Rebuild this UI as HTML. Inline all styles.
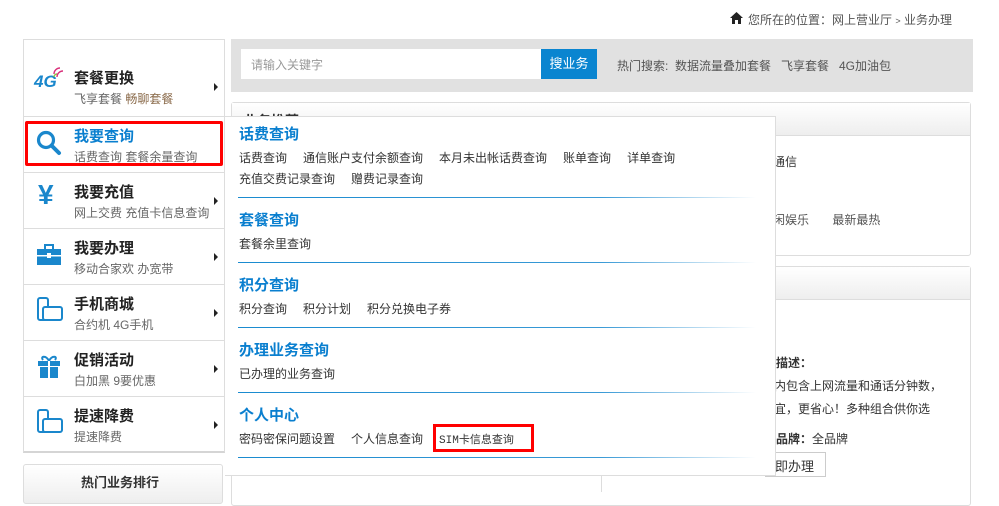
<!DOCTYPE html>
<html><head><meta charset="utf-8"><style>
*{margin:0;padding:0;box-sizing:border-box}
body{width:999px;height:492px;overflow:hidden;background:#fff;font-family:"Liberation Sans","Noto Sans CJK SC",sans-serif;font-size:12px;color:#333;position:relative}
.a{position:absolute;white-space:nowrap}
.menu{position:absolute;left:23px;top:39px;width:202px;height:414px;border:1px solid #ddd;border-bottom:2px solid #d5d5d5;background:#fff}
.it{position:absolute;left:0;width:200px;border-top:1px solid #ddd}
.it .t{position:absolute;left:50px;font-size:15px;font-weight:bold;color:#222}
.it .s{position:absolute;left:50px;font-size:12px;color:#666}
.it .ar{position:absolute;left:190px;width:0;height:0;border-left:4px solid #222;border-top:4px solid transparent;border-bottom:4px solid transparent}
.ic{position:absolute;left:12px}
.dd{position:absolute;left:225px;top:116px;width:551px;height:360px;background:#fff;border:1px solid #ddd;border-left:none}
.h{position:absolute;left:14px;font-size:15px;font-weight:bold;color:#0a7fcf}
.l{position:absolute;left:14px;font-size:12px;color:#333;word-spacing:0}
.l span{margin-right:16px}
.ln{position:absolute;left:13px;width:518px;height:1px;background:linear-gradient(to right,#1a8bd0,#3a9ad6 70%,rgba(120,190,230,0))}
</style></head><body>
<svg class="a" style="left:730px;top:12px" width="13" height="12" viewBox="0 0 13 12"><path d="M6.5 0L0 6h2v6h3V8h3v4h3V6h2z" fill="#222"/></svg>
<div class="a" style="left:748px;top:11px;font-size:12px;color:#555">您所在的位置：网上营业厅 <span style="font-size:9px">&gt;</span> 业务办理</div>

<div class="a" style="left:231px;top:39px;width:742px;height:53px;background:#e1e1e1"></div>
<div class="a" style="left:241px;top:49px;width:300px;height:30px;background:#fff"></div>
<div class="a" style="left:251px;top:56px;color:#999;font-size:12px">请输入关键字</div>
<div class="a" style="left:541px;top:49px;width:56px;height:30px;background:#0a85d0;color:#fff;font-size:13px;text-align:center;line-height:30px">搜业务</div>
<div class="a" style="left:617px;top:57px;color:#555">热门搜索:&nbsp; 数据流量叠加套餐&nbsp;&nbsp; 飞享套餐&nbsp;&nbsp; 4G加油包</div>

<div class="a" style="left:231px;top:102px;width:740px;height:154px;border:1px solid #ddd;border-radius:3px;background:#fff"></div>
<div class="a" style="left:232px;top:103px;width:738px;height:33px;background:linear-gradient(#fff,#eee);border-bottom:1px solid #ddd"></div>
<div class="a" style="left:243px;top:111px;font-size:14px;font-weight:bold;color:#333">业务推荐</div>
<div class="a" style="left:773px;top:153px;color:#333">通信</div>
<div class="a" style="left:773px;top:211px;color:#555">闲娱乐&nbsp;&nbsp;&nbsp;&nbsp;&nbsp;&nbsp;&nbsp;最新最热</div>
<div class="a" style="left:231px;top:266px;width:740px;height:240px;border:1px solid #ddd;border-radius:3px;background:#fff"></div>
<div class="a" style="left:232px;top:267px;width:738px;height:33px;background:linear-gradient(#fff,#eee);border-bottom:1px solid #ddd"></div>
<div class="a" style="left:601px;top:470px;width:1px;height:22px;background:#ddd"></div>
<div class="a" style="left:776px;top:354px;color:#333;font-weight:bold">描述：</div>
<div class="a" style="left:774px;top:377px;color:#333">内包含上网流量和通话分钟数，</div>
<div class="a" style="left:774px;top:400px;color:#333">宜，更省心！多种组合供你选</div>
<div class="a" style="left:776px;top:430px;color:#333"><b>品牌：</b>全品牌</div>
<div class="a" style="left:765px;top:452px;width:61px;height:25px;border:1px solid #ccc;background:#fff"></div>
<div class="a" style="left:775px;top:456px;color:#333;font-size:13px">即办理</div>

<div class="menu">
 <div class="it" style="top:-1px;height:77px;border-top:none">
  <div class="ic" style="top:33px;left:10px;font-style:italic;font-weight:bold;color:#1a87cc;font-size:17px">4G</div>
  <svg class="ic" style="left:29px;top:28px" width="12" height="12" viewBox="0 0 12 12"><path d="M1 10a3 3 0 0 1 3-3" stroke="#8cc63f" stroke-width="1.4" fill="none"/><path d="M1 7a6 6 0 0 1 6-6M1 4a9 9 0 0 1 0 0" stroke="#d9307a" stroke-width="1.4" fill="none"/><path d="M4 10a6 6 0 0 1 6-6" stroke="#d9307a" stroke-width="1.4" fill="none"/></svg>
  <div class="t" style="top:28px">套餐更换</div>
  <div class="s" style="top:51px">飞享套餐 <span style="color:#8a6a4a">畅聊套餐</span></div>
  <div class="ar" style="top:44px"></div>
 </div>
 <div class="it" style="top:76px;height:56px">
  <svg class="ic" style="top:13px" width="26" height="26" viewBox="0 0 26 26"><circle cx="10" cy="10" r="7.5" stroke="#1a87cc" stroke-width="3.2" fill="none"/><path d="M15.5 15.5L23 23" stroke="#1a87cc" stroke-width="4" stroke-linecap="round"/></svg>
  <div class="t" style="top:8px;color:#0a7fcf">我要查询</div>
  <div class="s" style="top:31px">话费查询 套餐余量查询</div>
 </div>
 <div class="it" style="top:132px;height:56px">
  <div class="ic" style="top:6px;left:14px;font-size:28px;font-weight:bold;color:#1a87cc">¥</div>
  <div class="t" style="top:8px">我要充值</div>
  <div class="s" style="top:31px">网上交费 充值卡信息查询</div>
  <div class="ar" style="top:24px"></div>
 </div>
 <div class="it" style="top:188px;height:56px">
  <svg class="ic" style="top:15px" width="26" height="22" viewBox="0 0 26 22"><rect x="9" y="1" width="8" height="5" fill="none" stroke="#1a87cc" stroke-width="2"/><rect x="1" y="5" width="24" height="16" fill="#1a87cc"/><rect x="0" y="11" width="26" height="1.5" fill="#fff"/><rect x="11" y="9" width="4" height="5" fill="#fff"/></svg>
  <div class="t" style="top:8px">我要办理</div>
  <div class="s" style="top:31px">移动合家欢 办宽带</div>
  <div class="ar" style="top:24px"></div>
 </div>
 <div class="it" style="top:244px;height:56px">
  <svg class="ic" style="top:12px;left:13px" width="26" height="26" viewBox="0 0 26 26"><rect x="1" y="1" width="10" height="22" rx="2" fill="#fff" stroke="#1a87cc" stroke-width="2"/><rect x="6" y="10" width="19" height="13" rx="2" fill="#fff" stroke="#1a87cc" stroke-width="2"/></svg>
  <div class="t" style="top:8px">手机商城</div>
  <div class="s" style="top:31px">合约机 4G手机</div>
  <div class="ar" style="top:24px"></div>
 </div>
 <div class="it" style="top:300px;height:56px">
  <svg class="ic" style="top:13px" width="26" height="26" viewBox="0 0 26 26"><path d="M13 7c-3-6-9-5-6-1M13 7c3-6 9-5 6-1" fill="none" stroke="#1a87cc" stroke-width="2"/><rect x="2" y="7" width="22" height="5" fill="#1a87cc"/><rect x="4" y="13" width="18" height="11" fill="#1a87cc"/><rect x="12" y="7" width="2" height="17" fill="#fff"/></svg>
  <div class="t" style="top:8px">促销活动</div>
  <div class="s" style="top:31px">白加黑 9要优惠</div>
  <div class="ar" style="top:24px"></div>
 </div>
 <div class="it" style="top:356px;height:56px">
  <svg class="ic" style="top:12px;left:13px" width="26" height="26" viewBox="0 0 26 26"><rect x="1" y="1" width="10" height="22" rx="2" fill="#fff" stroke="#1a87cc" stroke-width="2"/><rect x="6" y="10" width="19" height="13" rx="2" fill="#fff" stroke="#1a87cc" stroke-width="2"/></svg>
  <div class="t" style="top:8px">提速降费</div>
  <div class="s" style="top:31px">提速降费</div>
  <div class="ar" style="top:24px"></div>
 </div>
</div>
<div class="a" style="left:25px;top:121px;width:198px;height:45px;border:3px solid #f00;border-radius:2px"></div>

<div class="a" style="left:23px;top:464px;width:200px;height:40px;border:1px solid #ddd;border-radius:3px;background:linear-gradient(#fff,#eee)"></div>
<div class="a" style="left:81px;top:472px;font-size:13px;font-weight:bold;color:#333">热门业务排行</div>

<div class="dd">
 <div class="h" style="top:6px">话费查询</div>
 <div class="l" style="top:32px"><span>话费查询</span><span>通信账户支付余额查询</span><span>本月未出帐话费查询</span><span>账单查询</span><span>详单查询</span></div>
 <div class="l" style="top:53px"><span>充值交费记录查询</span><span>赠费记录查询</span></div>
 <div class="ln" style="top:80px"></div>
 <div class="h" style="top:92px">套餐查询</div>
 <div class="l" style="top:118px">套餐余里查询</div>
 <div class="ln" style="top:145px"></div>
 <div class="h" style="top:157px">积分查询</div>
 <div class="l" style="top:183px"><span>积分查询</span><span>积分计划</span><span>积分兑换电子券</span></div>
 <div class="ln" style="top:210px"></div>
 <div class="h" style="top:222px">办理业务查询</div>
 <div class="l" style="top:248px">已办理的业务查询</div>
 <div class="ln" style="top:275px"></div>
 <div class="h" style="top:287px">个人中心</div>
 <div class="l" style="top:313px"><span>密码密保问题设置</span><span>个人信息查询</span><span style="font-family:'Liberation Mono','Noto Sans CJK SC',monospace;font-size:11px">SIM卡信息查询</span></div>
 <div class="ln" style="top:340px"></div>
</div>
<div class="a" style="left:433px;top:424px;width:101px;height:28px;border:3px solid #f00"></div>
</body></html>
